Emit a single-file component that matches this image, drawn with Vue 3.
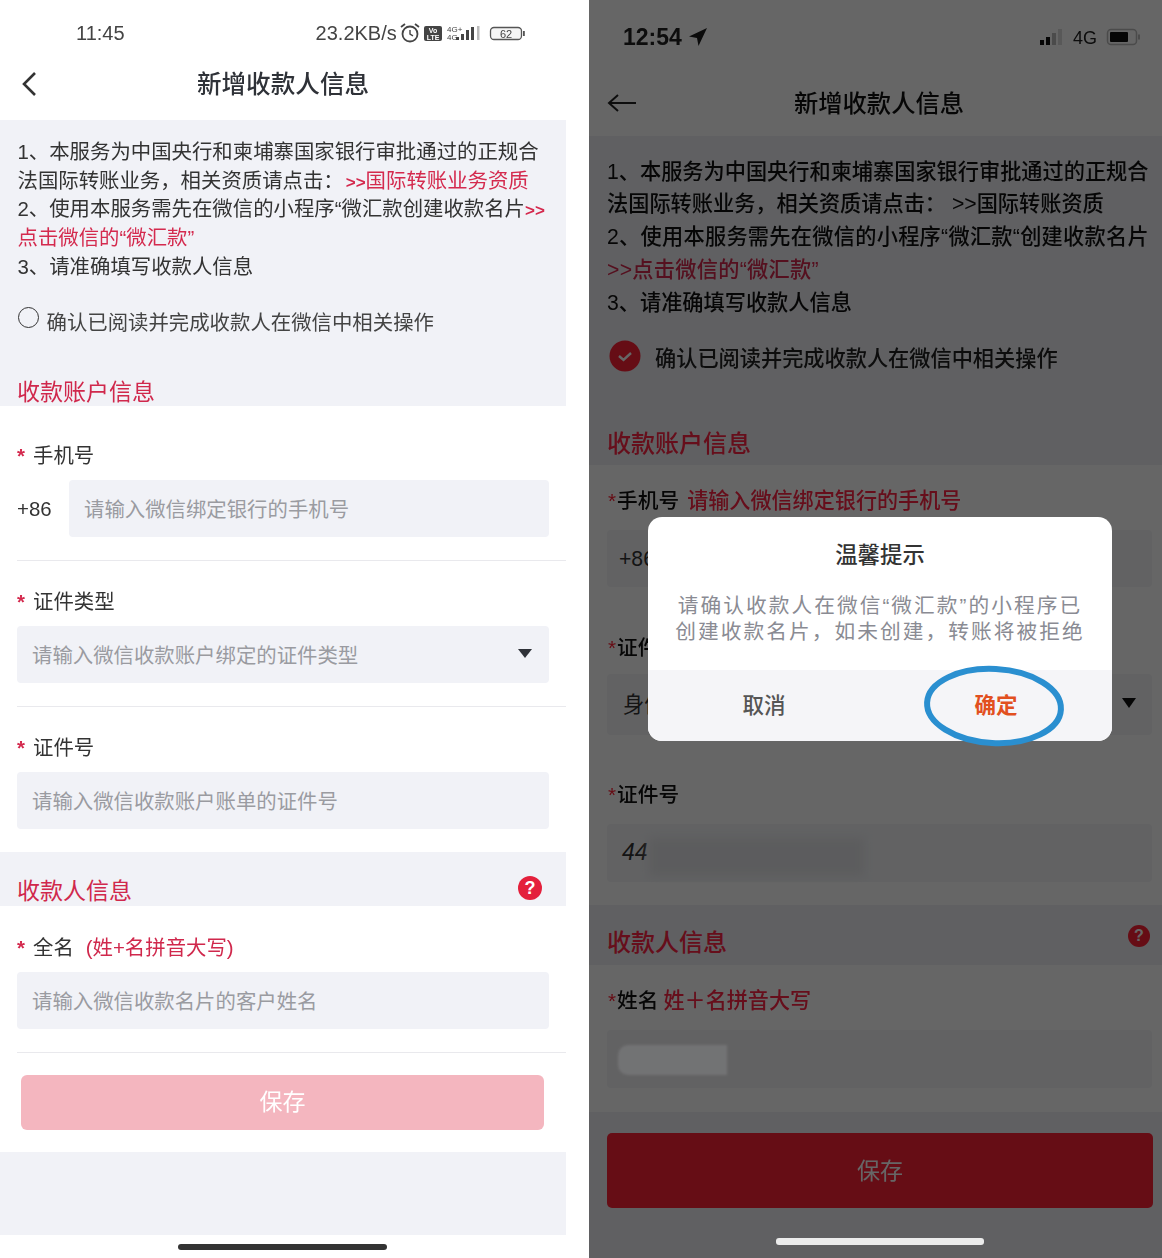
<script setup>
const dialogLines = ['请确认收款人在微信“微汇款”的小程序已', '创建收款名片，如未创建，转账将被拒绝'];
</script>

<template>
  <div class="page">
    <!-- left phone -->
    <div class="phone left">
      <div class="status">
        <span class="time">11:45</span>
        <span class="speed">23.2KB/s</span>
        <svg class="status-icons" width="126" height="22" viewBox="0 0 126 22">
          <circle cx="11" cy="12" r="7.5" fill="none" stroke="#444" stroke-width="1.8" />
          <path d="M11 8v4.2l3 1.6" fill="none" stroke="#444" stroke-width="1.4" />
          <path d="M2 5l4-3M20 5l-4-3" stroke="#444" stroke-width="1.8" />
          <rect x="25" y="4" width="18" height="15" rx="2" fill="#444" />
          <text x="34" y="10.5" class="tiny-white" text-anchor="middle">Vo</text>
          <text x="34" y="17.5" class="tiny-white" text-anchor="middle">LTE</text>
          <text x="48" y="9.5" class="tiny">4G+</text>
          <text x="48" y="18" class="tiny">4G</text>
          <rect x="57" y="15" width="3" height="3" fill="#444" />
          <rect x="62" y="12" width="3" height="6" fill="#444" />
          <rect x="67" y="8" width="3" height="10" fill="#444" />
          <rect x="72" y="5" width="3" height="13" fill="#444" />
          <rect x="78" y="4" width="2.5" height="14" fill="#bbb" />
          <rect x="91.500" y="5.500" width="31" height="12" rx="3.500" fill="#f4f4f4" stroke="#555" stroke-width="1.300" />
          <text x="107" y="15.500" class="batt" text-anchor="middle">62</text>
          <rect x="124" y="9" width="1.800" height="5" fill="#555" />
        </svg>
      </div>
      <div class="nav">
        <svg class="back" width="18" height="28" viewBox="0 0 18 28">
          <path d="M15 3L4 14l11 11" fill="none" stroke="#333" stroke-width="2.6" />
        </svg>
        <span class="nav-title">新增收款人信息</span>
      </div>

      <div class="intro">
        <div class="lines">
          <div>1、本服务为中国央行和柬埔寨国家银行审批通过的正规合</div>
          <div>法国际转账业务，相关资质请点击：<span class="red link"><b>&gt;&gt;</b>国际转账业务资质</span></div>
          <div>2、使用本服务需先在微信的小程序“微汇款创建收款名片<span class="red"><b>&gt;&gt;</b></span></div>
          <div class="red">点击微信的“微汇款”</div>
          <div>3、请准确填写收款人信息</div>
        </div>
        <div class="check-row">
          <span class="radio"></span>
          <span>确认已阅读并完成收款人在微信中相关操作</span>
        </div>
        <div class="band-title first">收款账户信息</div>
      </div>

      <div class="field line">
        <div class="label"><i>*</i>手机号</div>
        <div class="phone-row">
          <span class="code">+86</span>
          <div class="input">请输入微信绑定银行的手机号</div>
        </div>
      </div>
      <div class="field line second">
        <div class="label"><i>*</i>证件类型</div>
        <div class="input">请输入微信收款账户绑定的证件类型<span class="tri"></span></div>
      </div>
      <div class="field second">
        <div class="label"><i>*</i>证件号</div>
        <div class="input">请输入微信收款账户账单的证件号</div>
      </div>

      <div class="band">
        <div class="band-title">收款人信息</div>
        <span class="help">?</span>
      </div>

      <div class="field line third">
        <div class="label"><i>*</i>全名<em>(姓+名拼音大写)</em></div>
        <div class="input">请输入微信收款名片的客户姓名</div>
      </div>

      <div class="footer">
        <div class="save">保存</div>
      </div>
      <div class="grey-end"></div>
      <div class="home"></div>
    </div>

    <!-- right phone -->
    <div class="phone right">
      <div class="under">
        <div class="r-status">
          <span class="r-time">12:54</span>
          <svg width="20" height="20" viewBox="0 0 20 20" class="loc">
            <path d="M19 1L1 9.500l8 1.500 1.500 8z" fill="#1c1c1c" />
          </svg>
          <svg class="r-icons" width="102" height="20" viewBox="0 0 102 20">
            <rect x="0" y="13" width="4" height="5" fill="#111" />
            <rect x="6" y="10" width="4" height="8" fill="#111" />
            <rect x="12" y="6" width="4" height="12" fill="#bbb" />
            <rect x="18" y="2" width="4" height="16" fill="#ddd" />
            <text x="33" y="17" class="r-4g">4G</text>
            <rect x="67.500" y="2.500" width="29" height="15" rx="3.500" fill="none" stroke="#bbb" stroke-width="1.500" />
            <rect x="70" y="5" width="18" height="10" rx="1" fill="#111" />
            <rect x="98" y="7.500" width="2" height="5" fill="#bbb" />
          </svg>
        </div>
        <div class="r-nav">
          <svg class="r-back" width="30" height="20" viewBox="0 0 30 20">
            <path d="M29 10H2M11 2l-9 8 9 8" fill="none" stroke="#222" stroke-width="2" />
          </svg>
          <span class="r-title">新增收款人信息</span>
        </div>

        <div class="r-intro">
          <div class="r-lines">
            <div>1、本服务为中国央行和柬埔寨国家银行审批通过的正规合</div>
            <div>法国际转账业务，相关资质请点击： &gt;&gt;国际转账资质</div>
            <div class="spaced">2、使用本服务需先在微信的小程序“微汇款“创建收款名片</div>
            <div class="red spaced">&gt;&gt;点击微信的“微汇款”</div>
            <div>3、请准确填写收款人信息</div>
          </div>
          <div class="r-check">
            <svg width="32" height="32" viewBox="0 0 32 32">
              <circle cx="16" cy="16" r="15.500" fill="#ff2135" />
              <path d="M10 16l4.500 4 7.500-7" fill="none" stroke="#fff" stroke-width="2.400" />
            </svg>
            <span>确认已阅读并完成收款人在微信中相关操作</span>
          </div>
          <div class="r-band-title top">收款账户信息</div>
        </div>

        <div class="r-field f1">
          <div class="r-label"><i>*</i>手机号<em>请输入微信绑定银行的手机号</em></div>
          <div class="r-input">+86</div>
        </div>
        <div class="r-field f2">
          <div class="r-label"><i>*</i>证件类型</div>
          <div class="r-input tall">身份证<span class="r-tri"></span></div>
        </div>
        <div class="r-field f3">
          <div class="r-label"><i>*</i>证件号</div>
          <div class="r-input">44<span class="smudge"></span></div>
        </div>

        <div class="r-band">
          <div class="r-band-title">收款人信息</div>
          <span class="r-help">?</span>
        </div>

        <div class="r-field f4">
          <div class="r-label"><i>*</i>姓名<em>姓＋名拼音大写</em></div>
          <div class="r-input"></div>
        </div>

        <div class="r-footer">
          <div class="r-save">保存</div>
        </div>
      </div>

      <div class="overlay">
        <div class="dialog">
          <div class="d-title">温馨提示</div>
          <div class="d-body">
            <div v-for="line in dialogLines" :key="line">{{ line }}</div>
          </div>
          <div class="d-actions">
            <span>取消</span>
            <span class="ok">确定</span>
          </div>
          <svg class="ring" width="146" height="90" viewBox="0 0 146 90">
            <ellipse cx="73" cy="45" rx="67" ry="37" fill="none" stroke="#2a8fd0" stroke-width="6" transform="rotate(3 73 45)" />
          </svg>
        </div>
      </div>
      <div class="name-blur"></div>
      <div class="r-home"></div>
    </div>
  </div>
</template>

<style>
html, body {
  margin: 0;
  background: #fff;
}
</style>

<style scoped>
.page {
  width: 1162px;
  height: 1258px;
  display: flex;
  gap: 23px;
  overflow: hidden;
  font-family: "Liberation Sans", "Noto Sans CJK SC", sans-serif;
  background: #fff;
}

.phone {
  height: 1258px;
  position: relative;
  flex: none;
}

.left {
  width: 566px;
  color: #333;
  font-size: 20.4px;
  filter: blur(0.3px);
}

.right {
  width: 573px;
  background: #fff;
  overflow: hidden;
}

.red {
  color: #d42a4e;
}

/* left */
.status {
  height: 54px;
  padding-top: 6px;
  display: flex;
  align-items: center;
  color: #444;
  font-size: 20px;
}

.time {
  margin-left: 76px;
}

.speed {
  margin-left: 191px;
}

.status-icons {
  margin-left: 2px;
}

.tiny-white {
  font-size: 7px;
  font-weight: 700;
  fill: #fff;
  font-family: "Liberation Sans", sans-serif;
}

.tiny {
  font-size: 8px;
  fill: #444;
  font-family: "Liberation Sans", sans-serif;
}

.batt {
  font-size: 11px;
  fill: #444;
  font-family: "Liberation Sans", sans-serif;
}

.nav {
  height: 44px;
  padding-bottom: 16px;
  display: flex;
  align-items: center;
  justify-content: center;
  position: relative;
}

.back {
  position: absolute;
  left: 20px;
  top: 10px;
}

.nav-title {
  font-size: 24.600px;
  font-weight: 500;
  color: #2f3238;
}

.intro {
  background: #f1f2f7;
  padding: 18px 0 0 17.500px;
  height: 268px;
}

.lines {
  line-height: 28.700px;
  white-space: nowrap;
}

.lines > div {
  height: 28.700px;
}

.lines b {
  font-size: 17px;
  font-weight: 700;
  line-height: 0;
}

.link {
  margin-left: 2px;
}

.check-row {
  margin-top: 25.500px;
  height: 28px;
  display: flex;
  align-items: center;
  color: #444;
}

.radio {
  width: 19px;
  height: 19px;
  border: 1.500px solid #333;
  border-radius: 50%;
  margin-right: 8px;
  position: relative;
  top: -3px;
}

.band-title {
  color: #d0284c;
  font-size: 23px;
  line-height: 30px;
}

.band-title.first {
  margin-top: 41px;
  margin-left: -0.500px;
  line-height: 32px;
  height: 30px;
}

.field {
  margin-left: 17px;
  padding: 35px 17px 23px 0;
}

.field.second {
  padding-top: 26px;
}

.field.third {
  padding-top: 27px;
}

.field.line {
  border-bottom: 1px solid #e9e9ed;
}

.label {
  height: 28px;
  line-height: 30px;
  margin-bottom: 11px;
  color: #333;
}

.label i {
  display: inline-block;
  width: 16px;
  font-style: normal;
  font-weight: 700;
  color: #d42a4e;
}

.label em {
  margin-left: 12px;
  font-style: normal;
  color: #d0284c;
}

.phone-row {
  display: flex;
  align-items: center;
}

.code {
  width: 52px;
  flex: none;
  padding-top: 2px;
}

.input {
  flex: 1;
  height: 57px;
  line-height: 60px;
  padding-left: 15px;
  background: #f1f2f7;
  border-radius: 4px;
  color: #9a9ba1;
  position: relative;
}

.tri {
  position: absolute;
  right: 17px;
  top: 23px;
  border-style: solid;
  border-width: 9px 7.500px 0;
  border-color: #2f3238 transparent transparent;
}

.band {
  background: #f1f2f7;
  height: 54px;
  padding-left: 17px;
  box-sizing: border-box;
  padding-top: 24px;
  position: relative;
}

.help {
  position: absolute;
  left: 518px;
  top: 24px;
  width: 24px;
  height: 24px;
  border-radius: 50%;
  background: #e4203c;
  color: #fff;
  font-size: 18px;
  font-weight: 700;
  line-height: 24px;
  text-align: center;
}

.footer {
  padding: 22px 22px 22px 21px;
}

.save {
  height: 55px;
  line-height: 55px;
  border-radius: 6px;
  background: #f4b6bf;
  color: #fff;
  font-size: 23px;
  text-align: center;
}

.grey-end {
  height: 83px;
  background: #f1f2f7;
}

.home {
  position: absolute;
  left: 178px;
  top: 1244px;
  width: 209px;
  height: 6px;
  border-radius: 3px;
  background: #333;
}

/* right */
.under {
  height: 1258px;
  color: #111;
  font-size: 21.200px;
  filter: blur(0.5px);
}

.r-status {
  height: 74px;
  display: flex;
  align-items: center;
  padding-left: 34px;
  box-sizing: border-box;
}

.r-time {
  font-size: 23px;
  font-weight: 700;
  color: #222;
}

.loc {
  margin-left: 6px;
}

.r-icons {
  margin-left: auto;
  margin-right: 20px;
}

.r-4g {
  font-size: 18px;
  fill: #222;
  font-family: "Liberation Sans", sans-serif;
}

.r-nav {
  height: 54px;
  padding-bottom: 8px;
  display: flex;
  align-items: center;
  justify-content: center;
  position: relative;
}

.r-back {
  position: absolute;
  left: 18px;
  top: 19px;
}

.r-title {
  font-size: 24.300px;
  font-weight: 500;
  color: #111;
  margin-left: 7px;
}

.r-intro {
  background: #eff0f5;
  height: 329px;
  padding: 19.600px 0 0 18px;
  box-sizing: border-box;
}

.r-lines {
  line-height: 32.750px;
  white-space: nowrap;
  font-weight: 500;
}

.spaced {
  letter-spacing: 0.28px;
}

.r-check {
  margin-top: 20px;
  height: 34px;
  display: flex;
  align-items: center;
  gap: 14px;
  color: #222;
  padding-left: 2px;
  font-weight: 500;
}

.r-band-title {
  color: #ff2545;
  font-size: 24px;
  font-weight: 500;
  line-height: 36px;
  height: 34px;
}

.r-band-title.top {
  margin-top: 53px;
}

.r-field {
  padding: 23px 10px 23px 18px;
}

.f1, .f4 {
  padding-top: 21px;
}

.f4 {
  padding-bottom: 24px;
}

.f2 {
  padding-bottom: 22px;
}

.r-label {
  height: 28px;
  line-height: 30px;
  margin-bottom: 16px;
  font-weight: 500;
  font-size: 20.700px;
}

.f2 .r-label {
  margin-bottom: 13px;
}

.r-label i {
  font-style: normal;
  color: #ff2135;
  margin-left: 1px;
  margin-right: 1px;
}

.r-label em {
  margin-left: 8px;
  font-style: normal;
  font-size: 21.100px;
  color: #ff2545;
}

.f4 .r-label em {
  margin-left: 5px;
}

.r-input {
  height: 57px;
  line-height: 57px;
  padding-left: 12px;
  background: #f4f5f8;
  border-radius: 4px;
  position: relative;
  color: #333;
}

.f3 .r-input,
.f4 .r-input {
  height: 58px;
}

.f2 .r-input {
  padding-left: 16px;
}

.f3 .r-input {
  padding-left: 15px;
  font-size: 23px;
  font-style: italic;
}

.r-input.tall {
  height: 61px;
  line-height: 61px;
}

.r-tri {
  position: absolute;
  right: 16px;
  top: 24px;
  border-style: solid;
  border-width: 10px 7px 0;
  border-color: #111 transparent transparent;
}

.smudge {
  position: absolute;
  left: 42px;
  top: 14px;
  width: 215px;
  height: 38px;
  background: #e6e7ea;
  filter: blur(5px);
}

.name-blur {
  position: absolute;
  left: 29px;
  top: 1045px;
  width: 109px;
  height: 30px;
  border-radius: 10px 0 0 10px;
  background: rgba(255, 255, 255, 0.1);
  filter: blur(1px);
}

.r-band {
  background: #eff0f5;
  height: 60px;
  padding: 20px 0 0 18px;
  box-sizing: border-box;
  position: relative;
}

.r-help {
  position: absolute;
  left: 539px;
  top: 20px;
  width: 22px;
  height: 22px;
  border-radius: 50%;
  background: #ff2135;
  color: #fff;
  font-size: 16px;
  font-weight: 700;
  line-height: 22px;
  text-align: center;
}

.r-footer {
  background: #eff0f5;
  height: 146px;
  padding: 21px 9px 0 18px;
  box-sizing: border-box;
}

.r-save {
  height: 75px;
  line-height: 77px;
  background: #ff2135;
  border-radius: 5px;
  color: #fff;
  font-size: 23px;
  text-align: center;
}

.overlay {
  position: absolute;
  inset: 0;
  background: rgba(0, 0, 0, 0.6);
  display: flex;
  align-items: center;
  justify-content: center;
  padding-left: 9px;
  box-sizing: border-box;
}

.dialog {
  width: 464px;
  background: #fff;
  border-radius: 14px;
  position: relative;
  text-align: center;
  padding-top: 24px;
  box-sizing: border-box;
}

.d-title {
  font-size: 22.400px;
  font-weight: 500;
  color: #333;
  line-height: 30px;
}

.d-body {
  margin-top: 22px;
  font-size: 20.700px;
  line-height: 26px;
  letter-spacing: 2.050px;
  color: #8a8b93;
  white-space: nowrap;
  margin-bottom: 25px;
}

.d-actions {
  height: 67px;
  padding-bottom: 4px;
  background: #f5f5f8;
  border-radius: 0 0 14px 14px;
  display: flex;
  align-items: center;
  font-size: 21.500px;
  font-weight: 500;
  color: #555;
}

.d-actions span {
  flex: 1;
}

.ok {
  color: #e2501f;
  font-weight: 700;
}

.ring {
  position: absolute;
  left: 273px;
  top: 144px;
}

.r-home {
  position: absolute;
  left: 187px;
  top: 1238px;
  width: 208px;
  height: 7px;
  border-radius: 3px;
  background: #ececec;
}
</style>
